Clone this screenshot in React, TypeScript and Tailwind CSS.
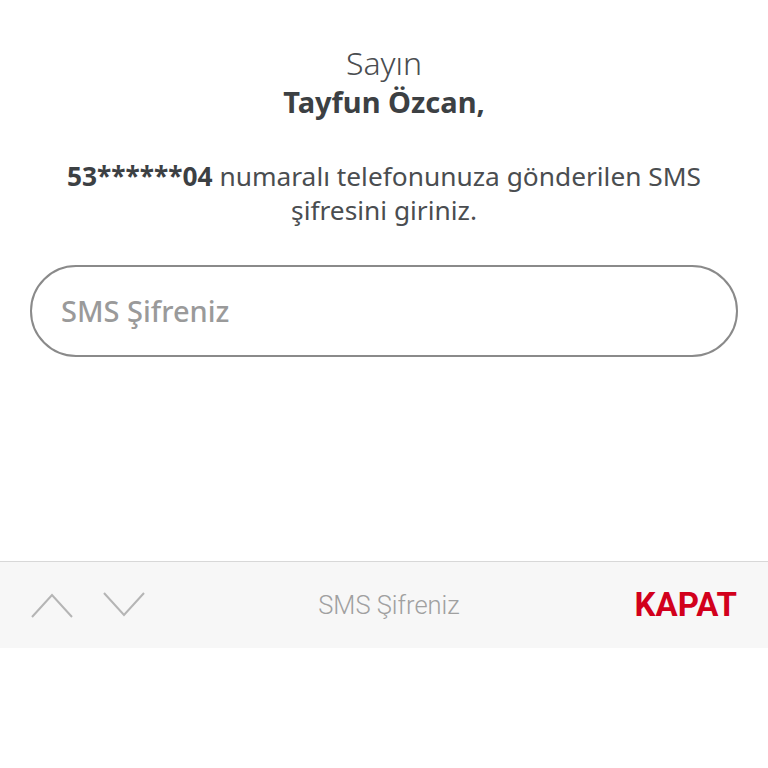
const Chevron = ({ up }: { up?: boolean }) => (
  <svg width="42" height="26" viewBox="0 0 42 26" fill="none" stroke="#b5b5b5" strokeWidth="2">
    {up ? <path d="M1 25 L21 3 L41 25" /> : <path d="M1 1 L21 23 L41 1" />}
  </svg>
);

const App = () => {
  return (
    <div className="w-[768px] h-[768px] bg-white flex flex-col" style={{ fontFamily: '"Noto Sans", "Open Sans", sans-serif' }}>
      <div className="flex flex-col items-center pt-[43px] text-center">
        <p className="text-[32px] leading-[40px] font-light text-[#4a4d50]">Sayın</p>
        <p className="text-[29px] leading-[38px] font-bold text-[#3c4043]">Tayfun Özcan,</p>
        <p className="mt-[38px] text-[26.3px] leading-[34px] text-[#4a4d50] px-[40px]">
          <span className="font-bold text-[#3c4043]">53******04</span> numaralı telefonunuza gönderilen SMS şifresini giriniz.
        </p>
      </div>
      <div className="mx-[30px] mt-[38px] h-[92px] rounded-full border-2 border-[#8a8a8a] flex items-center px-[29px]">
        <span className="text-[29px] font-medium text-[#9a9a9a]">SMS Şifreniz</span>
      </div>
      <div className="mt-[204px] h-[87px] bg-[#f7f7f7] border-t border-[#d8d8d8] flex items-center px-[31px]">
        <div className="flex gap-[30px] items-center">
          <Chevron up />
          <Chevron />
        </div>
        <div className="flex-1 text-center text-[25.5px] font-light text-[#a0a0a0]" style={{ fontFamily: 'Roboto, sans-serif' }}>SMS Şifreniz</div>
        <div className="text-[33px] font-bold text-[#d2001c] w-[104px] text-right" style={{ fontFamily: 'Roboto, sans-serif' }}>KAPAT</div>
      </div>
    </div>
  );
};

export default App;
